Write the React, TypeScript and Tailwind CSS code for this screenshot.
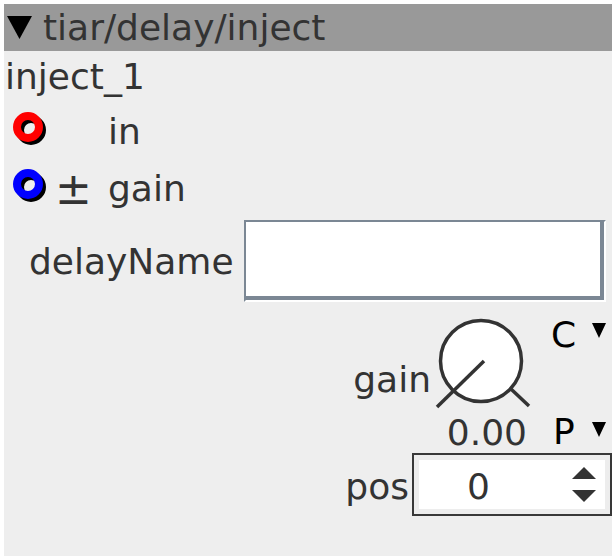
import React from "react";

function Ring({ color }: { color: string }) {
  return (
    <svg width="40" height="40" viewBox="0 0 40 40">
      <circle cx="18" cy="18" r="11" fill="none" stroke="#000" strokeWidth="8" />
      <circle cx="15" cy="15" r="11" fill="none" stroke={color} strokeWidth="8" />
    </svg>
  );
}

function Knob() {
  return (
    <svg width="100" height="96" viewBox="0 0 100 96">
      <circle cx="48" cy="46" r="40.5" fill="#fff" stroke="#333" strokeWidth="3.5" />
      <line x1="51" y1="46" x2="4" y2="92" stroke="#333" strokeWidth="3.5" />
      <line x1="78" y1="74" x2="96" y2="91" stroke="#333" strokeWidth="3.5" />
    </svg>
  );
}

function Tri() {
  return (
    <svg width="14" height="15" viewBox="0 0 14 15">
      <polygon points="0,0 14,0 7,15" fill="#000" />
    </svg>
  );
}

export default function App() {
  return (
    <div
      className="w-[616px] h-[560px] bg-white p-[4px] text-[#333333]"
      style={{ fontFamily: '"DejaVu Sans", sans-serif' }}
    >
      <div className="w-[608px] h-[552px] bg-[#eeeeee] flex flex-col text-[36px] leading-none">
        <div className="h-[47px] shrink-0 bg-[#999999] flex items-center">
          <svg width="25" height="23" viewBox="0 0 25 23" className="ml-[3px] mr-[11px]">
            <polygon points="0,0 25,0 12.5,23" fill="#000" />
          </svg>
          <span>tiar/delay/inject</span>
        </div>
        <div className="h-[52px] shrink-0 flex items-center pl-[1px]">inject_1</div>
        <div className="h-[58px] shrink-0 flex items-center">
          <div className="ml-[9px] w-[95px]">
            <Ring color="#ff0000" />
          </div>
          <span>in</span>
        </div>
        <div className="h-[56px] shrink-0 flex items-center">
          <div className="ml-[9px] w-[42px]">
            <Ring color="#0000ff" />
          </div>
          <span className="w-[53px] text-[44px]">±</span>
          <span>gain</span>
        </div>
        <div className="h-[85px] shrink-0 flex items-start pt-[3px]">
          <span className="ml-[25px] mr-[10px] mt-[24px]">delayName</span>
          <div className="w-[362px] h-[82px] border-t-[2px] border-l-[2px] border-[#7b8794] border-r-[2px] border-b-[2px] border-r-white border-b-white">
            <div className="w-full h-full bg-white border-r-[4px] border-b-[4px] border-[#7b8794]"></div>
          </div>
        </div>
        <div className="h-[151px] shrink-0 flex justify-end items-start">
          <span className="mt-[60px] mr-[2px]">gain</span>
          <div className="flex flex-col items-end">
            <div className="mt-[13px]">
              <Knob />
            </div>
            <span className="mt-[4px] mr-[6px]">0.00</span>
          </div>
          <div className="flex flex-col ml-[18px] mr-[6px] text-black w-[55px]">
            <div className="flex items-start mt-[15px]">
              <span>C</span>
              <div className="ml-auto mt-[6px]">
                <Tri />
              </div>
            </div>
            <div className="flex items-start mt-[61px] pl-[2px]">
              <span>P</span>
              <div className="ml-auto mt-[8px]">
                <Tri />
              </div>
            </div>
          </div>
        </div>
        <div className="flex justify-end items-start">
          <span className="mr-[3px] mt-[16px]">pos</span>
          <div className="w-[200px] h-[63px] border-[2px] border-[#383838] bg-white">
            <div className="w-full h-full border-[5px] border-[#ededed] flex items-center">
              <span className="ml-[48px] mt-[4px] flex-1">0</span>
              <svg width="24" height="35" viewBox="0 0 24 35" className="mr-[9px]">
                <polygon points="12,0 24,12 0,12" fill="#333" />
                <polygon points="0,23 24,23 12,35" fill="#333" />
              </svg>
            </div>
          </div>
        </div>
      </div>
    </div>
  );
}
